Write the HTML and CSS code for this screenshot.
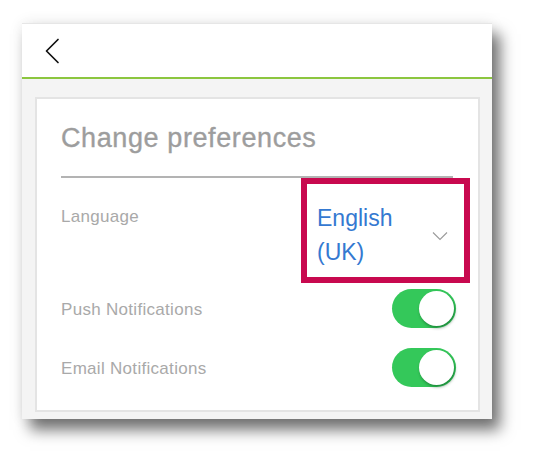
FILE: index.html
```html
<!DOCTYPE html>
<html lang="en">
<head>
<meta charset="utf-8">
<title>Change preferences</title>
<link rel="stylesheet" href="styles.css">
</head>
<body>
<div class="window">
  <header class="topbar">
    <svg class="back" width="20" height="26" viewBox="0 0 20 26" aria-label="Back">
      <path d="M16 1.5 L4.5 13 L16 24.5" fill="none" stroke="#111" stroke-width="1.7" stroke-linecap="round" stroke-linejoin="round"/>
    </svg>
  </header>
  <main class="content">
    <section class="card">
      <h1 class="title">Change preferences</h1>
      <div class="divider"></div>
      <div class="lang-row">
        <span class="label lang-label">Language</span>
        <div class="select">
          <span class="select-value">English<br>(UK)</span>
          <svg class="caret" width="16" height="10" viewBox="0 0 16 10">
            <path d="M1 1.5 L8 8.5 L15 1.5" fill="none" stroke="#9a9a9a" stroke-width="1.1"/>
          </svg>
        </div>
      </div>
      <div class="toggle-row first">
        <span class="label">Push Notifications</span>
        <span class="toggle"><span class="knob"></span></span>
      </div>
      <div class="toggle-row second">
        <span class="label">Email Notifications</span>
        <span class="toggle"><span class="knob"></span></span>
      </div>
    </section>
  </main>
</div>
</body>
</html>
```
FILE: styles.css
```css
html, body {
  margin: 0;
  padding: 0;
  background: #ffffff;
}
body {
  font-family: "Liberation Sans", Arial, sans-serif;
  padding: 23px 0 0 22px;
  min-height: 457px;
  box-sizing: border-box;
}
.window {
  width: 470px;
  height: 396px;
  display: flex;
  flex-direction: column;
  background: #f4f4f4;
  box-shadow: 8px 11px 14px rgba(0, 0, 0, 0.55), 0 0 14px rgba(0, 0, 0, 0.08);
}
.topbar {
  height: 53px;
  flex: none;
  background: #ffffff;
  border-top: 1px solid #e6e6e6;
  border-bottom: 2px solid #8cc63f;
  box-sizing: content-box;
  padding-left: 20px;
  display: flex;
  align-items: flex-start;
}
.topbar .back {
  margin-top: 14px;
  display: block;
}
.content {
  flex: 1;
  padding: 18px 12px 7px 13px;
  display: flex;
}
.card {
  flex: 1;
  background: #ffffff;
  border: 2px solid #e4e4e4;
  padding-top: 23px;
  display: flex;
  flex-direction: column;
}
.title {
  margin: 0 0 22px 24px;
  font-size: 27px;
  line-height: 32px;
  font-weight: normal;
  letter-spacing: 0.6px;
  color: #9d9d9d;
  -webkit-text-stroke: 0.35px #9d9d9d;
}
.divider {
  height: 2px;
  margin: 0 25px 0 24px;
  background: #b3b3b3;
}
.lang-row {
  display: flex;
  justify-content: space-between;
  align-items: flex-start;
  padding-left: 24px;
  padding-right: 8px;
}
.label {
  font-size: 17px;
  line-height: 20px;
  letter-spacing: 0.3px;
  color: #a9a9a9;
}
.lang-label {
  padding-top: 29px;
}
.select {
  width: 169px;
  height: 105px;
  border: 6px solid #c8094f;
  display: flex;
  align-items: center;
  justify-content: space-between;
  padding: 17px 16px 8px 10px;
  box-sizing: border-box;
}
.select-value {
  font-size: 23px;
  line-height: 34px;
  color: #3479d1;
}
.caret {
  display: block;
  margin-top: 1px;
}
.toggle-row {
  display: flex;
  align-items: center;
  justify-content: space-between;
  padding-left: 24px;
  padding-right: 22px;
  height: 39px;
}
.toggle-row .label {
  padding-top: 2px;
}
.toggle-row.first {
  margin-top: 6px;
}
.toggle-row.second {
  margin-top: 20px;
}
.toggle {
  width: 64px;
  height: 39px;
  border-radius: 20px;
  background: #34c85a;
  display: flex;
  align-items: center;
  justify-content: flex-end;
  padding: 0 2px;
  box-sizing: border-box;
}
.knob {
  width: 35px;
  height: 35px;
  border-radius: 50%;
  background: #ffffff;
  box-shadow: 1px 2px 3px rgba(0, 60, 20, 0.45);
}
```
